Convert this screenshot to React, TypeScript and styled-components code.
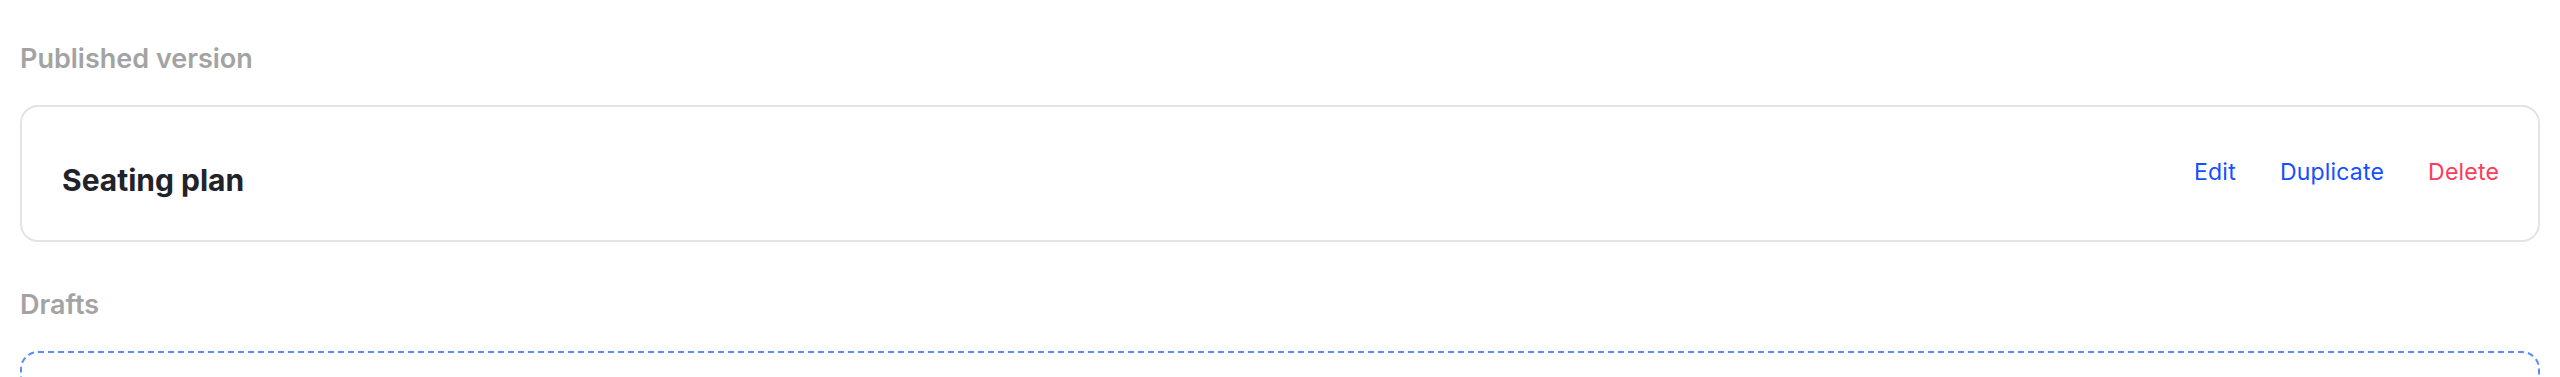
import React from "react";
import styled, { createGlobalStyle } from "styled-components";

const GlobalStyle = createGlobalStyle`
  html, body {
    margin: 0;
    padding: 0;
    background: #ffffff;
  }
  body {
    font-family: Inter, "Noto Sans", "Liberation Sans", sans-serif;
    -webkit-font-smoothing: antialiased;
  }
`;

const Page = styled.div`
  height: 100vh;
  overflow: hidden;
  box-sizing: border-box;
  padding: 42px 20px 0;
  display: flex;
  flex-direction: column;
`;

const SectionLabel = styled.h2`
  margin: 0 0 29px;
  font-size: 27px;
  line-height: 34px;
  font-weight: 600;
  color: #a3a3a3;
`;

const VersionCard = styled.div`
  flex-shrink: 0;
  display: flex;
  align-items: center;
  justify-content: space-between;
  height: 133px;
  padding: 0 39px 0 40px;
  border: 2px solid #e4e4e4;
  border-radius: 18px;
  margin-bottom: 46px;
`;

const Title = styled.span`
  font-size: 30px;
  font-weight: 700;
  color: #22232a;
  margin-top: 13px;
`;

const Actions = styled.div`
  display: flex;
  align-items: center;
  gap: 44px;
  margin-bottom: 3px;
`;

const ActionButton = styled.button<{ $danger?: boolean }>`
  border: 0;
  padding: 0;
  background: none;
  font-family: inherit;
  font-size: 23px;
  font-weight: 400;
  letter-spacing: 0.2px;
  color: ${(p) => (p.$danger ? "#ff3a5a" : "#1450ff")};
  cursor: pointer;
`;

const DraftsArea = styled.div`
  flex-shrink: 0;
  height: 200px;
  border: 2px dashed #5b8cff;
  border-radius: 18px;
`;

export default function App() {
  return (
    <>
      <GlobalStyle />
      <Page>
        <SectionLabel>Published version</SectionLabel>
        <VersionCard>
          <Title>Seating plan</Title>
          <Actions>
            <ActionButton>Edit</ActionButton>
            <ActionButton>Duplicate</ActionButton>
            <ActionButton $danger>Delete</ActionButton>
          </Actions>
        </VersionCard>
        <SectionLabel>Drafts</SectionLabel>
        <DraftsArea />
      </Page>
    </>
  );
}
